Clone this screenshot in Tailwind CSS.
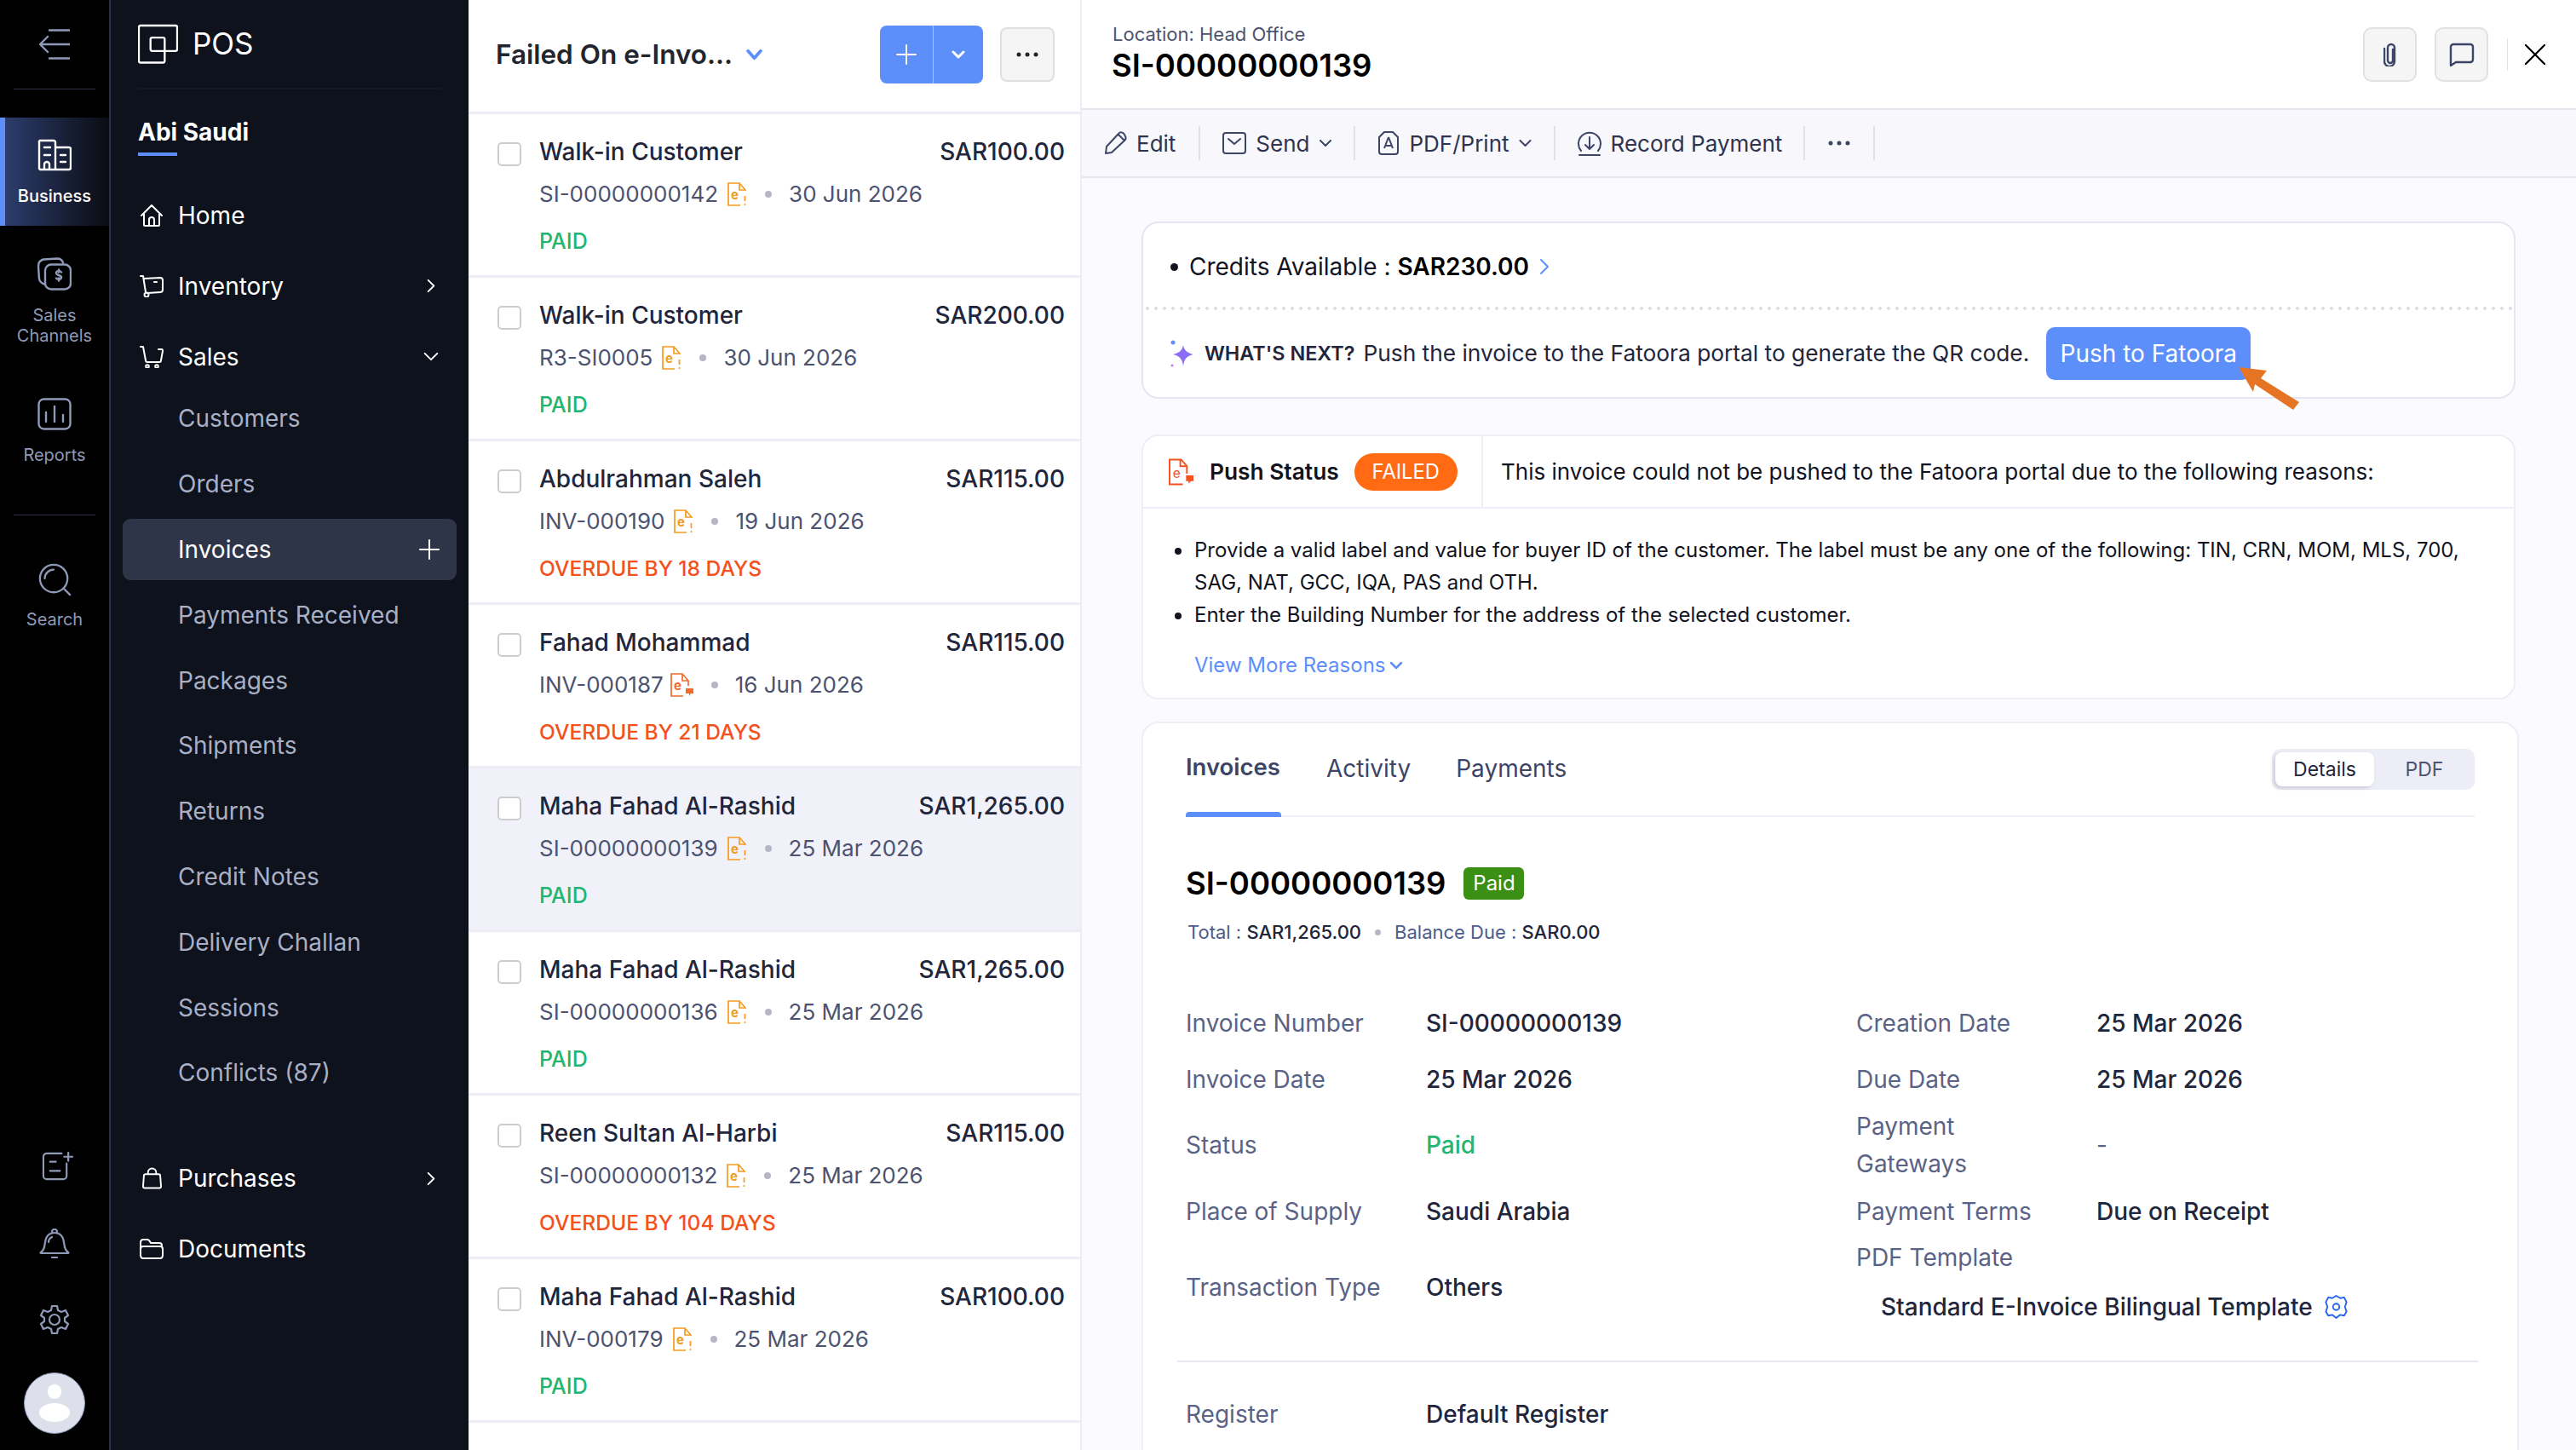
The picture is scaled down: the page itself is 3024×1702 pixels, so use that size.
<!DOCTYPE html>
<html lang="en">

<head>
    <meta charset="UTF-8" />
    <title>POS - Invoices</title>
    <script src="https://cdn.jsdelivr.net/npm/@tailwindcss/browser@4"></script>
</head>

<body class="bg-white font-['Inter','Liberation_Sans',sans-serif] text-[#21263c]">
    <div class="flex h-[1702px] w-[3024px] overflow-hidden">

        <!-- icon rail -->
        <aside class="flex h-full w-[130px] shrink-0 flex-col items-center border-r-2 border-[#2b3245] bg-black text-[20px] leading-[24px] text-[#8f9ab8]">
            <div class="flex h-[104px] w-full shrink-0 items-center justify-center">
                <svg class="h-[36px] w-[36px]" viewBox="0 0 36 36" fill="none" stroke="#8f9ab8" stroke-width="2.400" stroke-linecap="round" stroke-linejoin="round"><path d="M12 1.500h24M12 34.500h24M1 18h35M10 9l-9 9 9 9" /></svg>
            </div>
            <div class="h-px w-[96px] shrink-0 bg-[#2b3245]"></div>
            <div class="mt-[33px] flex h-[127px] w-full shrink-0 flex-col items-center border-l-[6px] border-[#5d8ffb] bg-linear-to-r from-[#2c3d6e] to-[#0b0d14] pr-[6px] text-white">
                <svg class="mt-[24px] h-[40px] w-[40px]" viewBox="0 0 40 38" fill="none" stroke="#fff" stroke-width="2.400" stroke-linecap="round" stroke-linejoin="round"><path d="M3 36h34a2 2 0 0 0 2-2V12a2 2 0 0 0-2-2H21V4a2 2 0 0 0-2-2H3a1.500 1.500 0 0 0-1 2v30a2 2 0 0 0 1 2zM21 10v26M8 10h7M8 19h7M27 19h6M27 27h6M8 36v-6a3 3 0 0 1 6 0v6" /></svg>
                <span class="mt-[16px] font-medium">Business</span>
            </div>
            <svg class="mt-[37px] h-[39px] w-[40px] shrink-0" viewBox="0 0 40 38" fill="none" stroke="#8f9ab8" stroke-width="2.400" stroke-linecap="round" stroke-linejoin="round"><path d="M8 31c-3-1-5-2-6-6L1 10c0-4 2-7 6-8l16-1c3 0 6 1 7 5" /><rect x="9" y="8" width="30" height="29" rx="7" /><path d="M28 17c-1-2-6-2-6 1s6 2 6 5-5 3-6 1M25 14v3M25 27v-3" /></svg>
            <span class="mt-[17px] w-full text-center">Sales Channels</span>
            <svg class="mt-[61px] h-[38px] w-[40px] shrink-0" viewBox="0 0 40 38" fill="none" stroke="#8f9ab8" stroke-width="2.400" stroke-linecap="round"><rect x="1.500" y="1.500" width="37" height="35" rx="6" /><path d="M10 17v11M20 10v18M30 20v8" /></svg>
            <span class="mt-[17px]">Reports</span>
            <div class="mt-[58px] h-px w-[96px] shrink-0 bg-[#2b3245]"></div>
            <svg class="mt-[55px] h-[40px] w-[40px] shrink-0" viewBox="0 0 42 42" fill="none" stroke="#8f9ab8" stroke-width="2.400" stroke-linecap="round"><circle cx="20" cy="20" r="17" /><path d="M32 32l8 8M9 20a11 11 0 0 1 11-11" /></svg>
            <span class="mt-[15px]">Search</span>

            <div class="mt-auto flex flex-col items-center pb-[19px]">
                <svg class="ml-[7px] h-[35px] w-[37px]" viewBox="0 0 38 34" fill="none" stroke="#8f9ab8" stroke-width="2.200" stroke-linecap="round" stroke-linejoin="round"><path d="M24 2H6a4 4 0 0 0-4 4v23a4 4 0 0 0 4 4h20a4 4 0 0 0 4-4V14M32 1v10M27 6h10M10 12h7M10 23h12" /></svg>
                <svg class="mt-[55px] h-[36px] w-[36px]" viewBox="0 0 36 36" fill="none" stroke="#8f9ab8" stroke-width="2.200" stroke-linecap="round" stroke-linejoin="round"><path d="M2 29c4-3 4-6 5-12 1-7 5-11 11-11s10 4 11 11c1 6 1 9 5 12 1 1 0 1-1 1H3c-1 0-2 0-1-1zM15 35h6M15 5a3 3 0 0 1 6 0M11 17c0-3 2-5 4-6" /></svg>
                <svg class="mt-[54px] h-[36px] w-[36px]" viewBox="0 0 36 36" fill="none" stroke="#8f9ab8" stroke-width="2.200" stroke-linecap="round" stroke-linejoin="round"><circle cx="18" cy="18" r="6" /><path d="M15 2h6l1 5 4 2 5-2 3 6-4 3v4l4 3-3 6-5-2-4 2-1 5h-6l-1-5-4-2-5 2-3-6 4-3v-4l-4-3 3-6 5 2 4-2z" /></svg>
                <div class="relative mt-[44px] h-[72px] w-[72px] overflow-hidden rounded-full border border-[#8f9ab8] bg-[#dde0ea]">
                    <div class="absolute top-[13px] left-[27px] h-[17px] w-[16px] rounded-full bg-white"></div>
                    <div class="absolute top-[35px] left-[17px] h-[22px] w-[36px] rounded-[50%] bg-white"></div>
                </div>
            </div>
        </aside>

        <!-- module sidebar -->
        <nav class="flex h-full w-[420px] shrink-0 flex-col bg-[#0d121c] px-[32px] text-white">
            <div class="flex h-[105px] shrink-0 items-center gap-[17px] border-b-2 border-[#161b27]">
                <svg class="h-[47px] w-[47px]" viewBox="0 0 48 47" fill="none" stroke="#fff" stroke-width="2.400" stroke-linejoin="round"><path d="M3 1.500h42a2 2 0 0 1 2 2V30a2 2 0 0 1-2 2H17a2 2 0 0 1-2-2V18a2 2 0 0 1 2-2h13a2 2 0 0 1 2 2v26a2 2 0 0 1-2 2H3a2 2 0 0 1-2-2V3.500a2 2 0 0 1 2-2z" /></svg>
                <span class="text-[35px] leading-none font-normal">POS</span>
            </div>
            <div class="mt-[32px] text-[28px] leading-[36px] font-bold">Abi Saudi</div>
            <div class="mt-[6px] h-[4px] w-[46px] shrink-0 bg-[#5d8ffb]"></div>

            <div class="mt-[28px] flex h-[83px] shrink-0 items-center gap-[18px] text-[28px]">
                <svg class="ml-[3px] h-[26px] w-[26px]" viewBox="0 0 26 26" fill="none" stroke="#fff" stroke-width="2" stroke-linejoin="round" stroke-linecap="round"><path d="M1 13L13 1l12 12M4 11v13a1 1 0 0 0 1 1h16a1 1 0 0 0 1-1V11M10 25v-7a3 3 0 0 1 6 0v7" /></svg>
                <span>Home</span>
            </div>
            <div class="flex h-[83px] shrink-0 items-center gap-[17px] text-[28px]">
                <svg class="ml-[2px] h-[26px] w-[28px]" viewBox="0 0 28 26" fill="none" stroke="#fff" stroke-width="2" stroke-linejoin="round" stroke-linecap="round"><path d="M1 1h3l3 19M5 4l19-1c2 0 3 1 3 3v11c0 2-1 3-3 3l-15 1" /><circle cx="8" cy="23" r="2.500" /><path d="M17 8h3" /></svg>
                <span>Inventory</span>
                <svg class="mr-[7px] ml-auto h-[19px] w-[10px]" viewBox="0 0 12 20" fill="none" stroke="#fff" stroke-width="2.200" stroke-linecap="round" stroke-linejoin="round"><path d="M2 2l8 8-8 8" /></svg>
            </div>
            <div class="flex h-[83px] shrink-0 items-center gap-[17px] text-[28px]">
                <svg class="ml-[2px] h-[26px] w-[28px]" viewBox="0 0 28 26" fill="none" stroke="#fff" stroke-width="2" stroke-linejoin="round" stroke-linecap="round"><path d="M1 1h3l3 16c0 1 1 2 2 2h14c1 0 2-1 2-2l2-11c0-1 0-2-1-2h-4" /><circle cx="9" cy="24" r="1.800" /><circle cx="20" cy="24" r="1.800" /></svg>
                <span>Sales</span>
                <svg class="mr-[2px] ml-auto h-[11px] w-[20px]" viewBox="0 0 20 12" fill="none" stroke="#fff" stroke-width="2" stroke-linecap="round" stroke-linejoin="round"><path d="M2 2l8 8 8-8" /></svg>
            </div>

            <div class="-mt-[7px] flex shrink-0 flex-col text-[28px] text-[#a9afc4]">
                <a class="flex h-[76.800px] items-center pl-[47px]">Customers</a>
                <a class="flex h-[76.800px] items-center pl-[47px]">Orders</a>
                <a class="-mx-[18px] my-[2px] flex h-[72.800px] items-center rounded-[9px] bg-[#2f3548] pr-[20px] pl-[65px] text-white">Invoices<svg class="ml-auto h-[24px] w-[24px]" viewBox="0 0 24 24" fill="none" stroke="#fff" stroke-width="2" stroke-linecap="round"><path d="M12 1v22M1 12h22" /></svg></a>
                <a class="flex h-[76.800px] items-center pl-[47px]">Payments Received</a>
                <a class="flex h-[76.800px] items-center pl-[47px]">Packages</a>
                <a class="flex h-[76.800px] items-center pl-[47px]">Shipments</a>
                <a class="flex h-[76.800px] items-center pl-[47px]">Returns</a>
                <a class="flex h-[76.800px] items-center pl-[47px]">Credit Notes</a>
                <a class="flex h-[76.800px] items-center pl-[47px]">Delivery Challan</a>
                <a class="flex h-[76.800px] items-center pl-[47px]">Sessions</a>
                <a class="flex h-[76.800px] items-center pl-[47px]">Conflicts (87)</a>
            </div>

            <div class="mt-[44px] flex h-[83px] shrink-0 items-center gap-[19px] text-[28px]">
                <svg class="ml-[5px] h-[26px] w-[23px]" viewBox="0 0 24 26" fill="none" stroke="#fff" stroke-width="2" stroke-linejoin="round" stroke-linecap="round"><path d="M4 8h16a2 2 0 0 1 2 2l1 13a2 2 0 0 1-2 2H3a2 2 0 0 1-2-2l1-13a2 2 0 0 1 2-2zM7 8V6a5 5 0 0 1 10 0v2" /></svg>
                <span>Purchases</span>
                <svg class="mr-[7px] ml-auto h-[19px] w-[10px]" viewBox="0 0 12 20" fill="none" stroke="#fff" stroke-width="2.200" stroke-linecap="round" stroke-linejoin="round"><path d="M2 2l8 8-8 8" /></svg>
            </div>
            <div class="flex h-[83px] shrink-0 items-center gap-[17px] text-[28px]">
                <svg class="ml-[2px] h-[24px] w-[28px]" viewBox="0 0 28 24" fill="none" stroke="#fff" stroke-width="2" stroke-linejoin="round" stroke-linecap="round"><path d="M1 19V5c0-2 1-4 3-4h5c2 0 3 2 4 4h10c2 0 3 1 3 3M1 12c0-2 1-3 3-3h20c2 0 3 1 3 3v7c0 2-1 4-3 4H4c-2 0-3-2-3-4z" /></svg>
                <span>Documents</span>
            </div>
        </nav>

        <!-- invoice list -->
        <section class="flex h-full w-[720px] shrink-0 flex-col overflow-hidden border-r-2 border-[#ecedf5]">
            <div class="flex h-[134px] shrink-0 items-center border-b-[3px] border-[#ecedf5] pr-[30px] pb-[3px] pl-[32px]">
                <span class="text-[31.500px] leading-none font-semibold text-[#21252e]">Failed On e-Invo...</span>
                <svg class="ml-[15px] h-[13px] w-[21px]" viewBox="0 0 20 14" fill="none" stroke="#5d8ffb" stroke-width="4" stroke-linecap="round" stroke-linejoin="round"><path d="M2 2l8 9 8-9" /></svg>
                <div class="mr-[20px] ml-auto flex h-[68px] w-[121px] rounded-[8px] bg-[#5d8ffb]">
                    <div class="flex w-[63px] items-center justify-center border-r border-[#a9c3fd]"><svg class="h-[24px] w-[24px]" viewBox="0 0 24 24" fill="none" stroke="#fff" stroke-width="2" stroke-linecap="round"><path d="M12 1v22M1 12h22" /></svg></div>
                    <div class="flex flex-1 items-center justify-center"><svg class="h-[10px] w-[16px]" viewBox="0 0 16 10" fill="none" stroke="#fff" stroke-width="3" stroke-linecap="round" stroke-linejoin="round"><path d="M2 2l6 6 6-6" /></svg></div>
                </div>
                <div class="flex h-[64px] w-[64px] items-center justify-center rounded-[8px] border-2 border-[#dedfe3] bg-[#f5f5f6] text-[#21252e]"><svg class="h-[6px] w-[26px]" viewBox="0 0 26 6" fill="#21252e"><circle cx="3" cy="3" r="2.500" /><circle cx="13" cy="3" r="2.500" /><circle cx="23" cy="3" r="2.500" /></svg></div>
            </div>

            <div class="flex h-[192px] shrink-0 border-b-[3px] border-[#ecedf5] pt-[33px] pr-[18px] pl-[34px]">
                <div class="h-[28px] w-[28px] rounded-[5px] border-2 border-[#cdcdd1]"></div>
                <div class="-mt-[7px] ml-[21px] flex-1">
                    <div class="flex justify-between text-[28px] leading-[36px] font-medium text-[#21263c]"><span>Walk-in Customer</span><span>SAR100.00</span></div>
                    <div class="mt-[14px] flex items-center text-[26px] leading-[36px] text-[#4c5370]">SI-00000000142<svg class="mr-[22px] ml-[11px] h-[28px] w-[22px]" viewBox="0 0 22 28" fill="none" stroke="#f39c1f" stroke-width="1.700"><path d="M15 27H1V1h13l7 8v1M14 1v8h7" /><text x="4" y="20" font-size="15" font-weight="700" stroke="none" fill="#f39c1f">e</text><path d="M20.500 16v6M20.500 25v2" /></svg><span class="h-[8px] w-[8px] rounded-full bg-[#b5b7c6]"></span><span class="ml-[20px]">30 Jun 2026</span></div>
                    <div class="mt-[21px] text-[25px] leading-[32px] font-medium text-[#22b573]">PAID</div>
                </div>
            </div>
            <div class="flex h-[192px] shrink-0 border-b-[3px] border-[#ecedf5] pt-[33px] pr-[18px] pl-[34px]">
                <div class="h-[28px] w-[28px] rounded-[5px] border-2 border-[#cdcdd1]"></div>
                <div class="-mt-[7px] ml-[21px] flex-1">
                    <div class="flex justify-between text-[28px] leading-[36px] font-medium text-[#21263c]"><span>Walk-in Customer</span><span>SAR200.00</span></div>
                    <div class="mt-[14px] flex items-center text-[26px] leading-[36px] text-[#4c5370]">R3-SI0005<svg class="mr-[22px] ml-[11px] h-[28px] w-[22px]" viewBox="0 0 22 28" fill="none" stroke="#f39c1f" stroke-width="1.700"><path d="M15 27H1V1h13l7 8v1M14 1v8h7" /><text x="4" y="20" font-size="15" font-weight="700" stroke="none" fill="#f39c1f">e</text><path d="M20.500 16v6M20.500 25v2" /></svg><span class="h-[8px] w-[8px] rounded-full bg-[#b5b7c6]"></span><span class="ml-[20px]">30 Jun 2026</span></div>
                    <div class="mt-[21px] text-[25px] leading-[32px] font-medium text-[#22b573]">PAID</div>
                </div>
            </div>
            <div class="flex h-[192px] shrink-0 border-b-[3px] border-[#ecedf5] pt-[33px] pr-[18px] pl-[34px]">
                <div class="h-[28px] w-[28px] rounded-[5px] border-2 border-[#cdcdd1]"></div>
                <div class="-mt-[7px] ml-[21px] flex-1">
                    <div class="flex justify-between text-[28px] leading-[36px] font-medium text-[#21263c]"><span>Abdulrahman Saleh</span><span>SAR115.00</span></div>
                    <div class="mt-[14px] flex items-center text-[26px] leading-[36px] text-[#4c5370]">INV-000190<svg class="mr-[22px] ml-[11px] h-[28px] w-[22px]" viewBox="0 0 22 28" fill="none" stroke="#f39c1f" stroke-width="1.700"><path d="M15 27H1V1h13l7 8v1M14 1v8h7" /><text x="4" y="20" font-size="15" font-weight="700" stroke="none" fill="#f39c1f">e</text><path d="M20.500 16v6M20.500 25v2" /></svg><span class="h-[8px] w-[8px] rounded-full bg-[#b5b7c6]"></span><span class="ml-[20px]">19 Jun 2026</span></div>
                    <div class="mt-[21px] text-[24.600px] leading-[32px] font-medium text-[#f4511e]">OVERDUE BY 18 DAYS</div>
                </div>
            </div>
            <div class="flex h-[192px] shrink-0 border-b-[3px] border-[#ecedf5] pt-[33px] pr-[18px] pl-[34px]">
                <div class="h-[28px] w-[28px] rounded-[5px] border-2 border-[#cdcdd1]"></div>
                <div class="-mt-[7px] ml-[21px] flex-1">
                    <div class="flex justify-between text-[28px] leading-[36px] font-medium text-[#21263c]"><span>Fahad Mohammad</span><span>SAR115.00</span></div>
                    <div class="mt-[14px] flex items-center text-[26px] leading-[36px] text-[#4c5370]">INV-000187<svg class="mr-[20px] ml-[8px] h-[28px] w-[28px]" viewBox="0 0 28 28" fill="none" stroke="#f26a2e" stroke-width="1.700"><path d="M15 27H1V1h13l7 8v6M14 1v8h7" /><text x="4" y="20" font-size="15" font-weight="700" stroke="none" fill="#f26a2e">e</text><path d="M18 18h9v6h-3l-2 3v-3h-4z" fill="#f26a2e" stroke="none" /></svg><span class="h-[8px] w-[8px] rounded-full bg-[#b5b7c6]"></span><span class="ml-[20px]">16 Jun 2026</span></div>
                    <div class="mt-[21px] text-[24.600px] leading-[32px] font-medium text-[#f4511e]">OVERDUE BY 21 DAYS</div>
                </div>
            </div>
            <div class="flex h-[192px] shrink-0 border-b-[3px] border-[#ecedf5] bg-[#f0f1f9] pt-[33px] pr-[18px] pl-[34px]">
                <div class="h-[28px] w-[28px] rounded-[5px] border-2 border-[#cdcdd1] bg-white"></div>
                <div class="-mt-[7px] ml-[21px] flex-1">
                    <div class="flex justify-between text-[28px] leading-[36px] font-medium text-[#21263c]"><span>Maha Fahad Al-Rashid</span><span>SAR1,265.00</span></div>
                    <div class="mt-[14px] flex items-center text-[26px] leading-[36px] text-[#4c5370]">SI-00000000139<svg class="mr-[22px] ml-[11px] h-[28px] w-[22px]" viewBox="0 0 22 28" fill="none" stroke="#f39c1f" stroke-width="1.700"><path d="M15 27H1V1h13l7 8v1M14 1v8h7" /><text x="4" y="20" font-size="15" font-weight="700" stroke="none" fill="#f39c1f">e</text><path d="M20.500 16v6M20.500 25v2" /></svg><span class="h-[8px] w-[8px] rounded-full bg-[#b5b7c6]"></span><span class="ml-[20px]">25 Mar 2026</span></div>
                    <div class="mt-[21px] text-[25px] leading-[32px] font-medium text-[#22b573]">PAID</div>
                </div>
            </div>
            <div class="flex h-[192px] shrink-0 border-b-[3px] border-[#ecedf5] pt-[33px] pr-[18px] pl-[34px]">
                <div class="h-[28px] w-[28px] rounded-[5px] border-2 border-[#cdcdd1]"></div>
                <div class="-mt-[7px] ml-[21px] flex-1">
                    <div class="flex justify-between text-[28px] leading-[36px] font-medium text-[#21263c]"><span>Maha Fahad Al-Rashid</span><span>SAR1,265.00</span></div>
                    <div class="mt-[14px] flex items-center text-[26px] leading-[36px] text-[#4c5370]">SI-00000000136<svg class="mr-[22px] ml-[11px] h-[28px] w-[22px]" viewBox="0 0 22 28" fill="none" stroke="#f39c1f" stroke-width="1.700"><path d="M15 27H1V1h13l7 8v1M14 1v8h7" /><text x="4" y="20" font-size="15" font-weight="700" stroke="none" fill="#f39c1f">e</text><path d="M20.500 16v6M20.500 25v2" /></svg><span class="h-[8px] w-[8px] rounded-full bg-[#b5b7c6]"></span><span class="ml-[20px]">25 Mar 2026</span></div>
                    <div class="mt-[21px] text-[25px] leading-[32px] font-medium text-[#22b573]">PAID</div>
                </div>
            </div>
            <div class="flex h-[192px] shrink-0 border-b-[3px] border-[#ecedf5] pt-[33px] pr-[18px] pl-[34px]">
                <div class="h-[28px] w-[28px] rounded-[5px] border-2 border-[#cdcdd1]"></div>
                <div class="-mt-[7px] ml-[21px] flex-1">
                    <div class="flex justify-between text-[28px] leading-[36px] font-medium text-[#21263c]"><span>Reen Sultan Al-Harbi</span><span>SAR115.00</span></div>
                    <div class="mt-[14px] flex items-center text-[26px] leading-[36px] text-[#4c5370]">SI-00000000132<svg class="mr-[22px] ml-[11px] h-[28px] w-[22px]" viewBox="0 0 22 28" fill="none" stroke="#f39c1f" stroke-width="1.700"><path d="M15 27H1V1h13l7 8v1M14 1v8h7" /><text x="4" y="20" font-size="15" font-weight="700" stroke="none" fill="#f39c1f">e</text><path d="M20.500 16v6M20.500 25v2" /></svg><span class="h-[8px] w-[8px] rounded-full bg-[#b5b7c6]"></span><span class="ml-[20px]">25 Mar 2026</span></div>
                    <div class="mt-[21px] text-[24.600px] leading-[32px] font-medium text-[#f4511e]">OVERDUE BY 104 DAYS</div>
                </div>
            </div>
            <div class="flex h-[192px] shrink-0 border-b-[3px] border-[#ecedf5] pt-[33px] pr-[18px] pl-[34px]">
                <div class="h-[28px] w-[28px] rounded-[5px] border-2 border-[#cdcdd1]"></div>
                <div class="-mt-[7px] ml-[21px] flex-1">
                    <div class="flex justify-between text-[28px] leading-[36px] font-medium text-[#21263c]"><span>Maha Fahad Al-Rashid</span><span>SAR100.00</span></div>
                    <div class="mt-[14px] flex items-center text-[26px] leading-[36px] text-[#4c5370]">INV-000179<svg class="mr-[22px] ml-[11px] h-[28px] w-[22px]" viewBox="0 0 22 28" fill="none" stroke="#f39c1f" stroke-width="1.700"><path d="M15 27H1V1h13l7 8v1M14 1v8h7" /><text x="4" y="20" font-size="15" font-weight="700" stroke="none" fill="#f39c1f">e</text><path d="M20.500 16v6M20.500 25v2" /></svg><span class="h-[8px] w-[8px] rounded-full bg-[#b5b7c6]"></span><span class="ml-[20px]">25 Mar 2026</span></div>
                    <div class="mt-[21px] text-[25px] leading-[32px] font-medium text-[#22b573]">PAID</div>
                </div>
            </div>
            <div class="flex h-[192px] shrink-0 pt-[33px] pr-[18px] pl-[34px]">
                <div class="h-[28px] w-[28px] rounded-[5px] border-2 border-[#cdcdd1]"></div>
                <div class="-mt-[7px] ml-[21px] flex-1">
                    <div class="flex justify-between text-[28px] leading-[36px] font-medium text-[#21263c]"><span>Walid</span><span>SAR115.00</span></div>
                </div>
            </div>
        </section>

        <!-- invoice detail -->
        <main class="flex h-full min-w-0 flex-1 flex-col overflow-hidden bg-[#fafaff]">
            <header class="flex h-[129px] shrink-0 items-center border-b-2 border-[#e6e6f2] bg-white pr-[36px] pl-[35px]">
                <div>
                    <div class="pl-px text-[22px] leading-[26px] text-[#4c5370]">Location: Head Office</div>
                    <div class="mt-px text-[36.500px] leading-[46px] font-semibold text-black">SI-00000000139</div>
                </div>
                <div class="ml-auto flex h-[64px] w-[63px] items-center justify-center rounded-[10px] border-2 border-[#e1e1e4] bg-[#f5f5f6]"><svg class="h-[28px] w-[16px]" viewBox="0 0 16 28" fill="none" stroke="#3d4566" stroke-width="2.400" stroke-linecap="round"><path d="M11 8v13a3 3 0 0 1-6 0V6a4 4 0 0 1 8 0v16a6 6 0 0 1-12 0V7" /></svg></div>
                <div class="ml-[21px] flex h-[64px] w-[63px] items-center justify-center rounded-[10px] border-2 border-[#e1e1e4] bg-[#f5f5f6]"><svg class="h-[28px] w-[30px]" viewBox="0 0 30 28" fill="none" stroke="#3d4566" stroke-width="2.400" stroke-linejoin="round"><path d="M2 5a3 3 0 0 1 3-3h20a3 3 0 0 1 3 3v15a3 3 0 0 1-3 3H8l-6 4z" /></svg></div>
                <div class="mr-[20px] ml-[22px] h-[38px] w-px bg-[#e1e1e4]"></div>
                <svg class="h-[24px] w-[24px]" viewBox="0 0 24 24" fill="none" stroke="#000" stroke-width="2.200" stroke-linecap="round"><path d="M1 1l22 22M23 1L1 23" /></svg>
            </header>

            <div class="flex h-[80px] shrink-0 items-center border-b-2 border-[#e6e6f2] bg-[#f7f7fc] pl-[26px] text-[26px] text-[#2e3450]">
                <div class="flex h-[40px] items-center gap-[10px] border-r-2 border-[#e1e1ec] pr-[27px]"><svg class="h-[28px] w-[28px]" viewBox="0 0 28 28" fill="none" stroke="#3d4566" stroke-width="2" stroke-linejoin="round"><path d="M2 26l1-8L17 3a4 4 0 0 1 7 1l1 2a4 4 0 0 1-1 5L9 25zM17 4l7 7" /></svg>Edit</div>
                <div class="flex h-[40px] items-center border-r-2 border-[#e1e1ec] pr-[26px] pl-[26px]"><svg class="mr-[11px] h-[26px] w-[28px]" viewBox="0 0 28 26" fill="none" stroke="#3d4566" stroke-width="2" stroke-linejoin="round" stroke-linecap="round"><rect x="1" y="1" width="26" height="24" rx="3" /><path d="M7 8l7 6 7-6" /></svg>Send<svg class="ml-[12px] h-[8px] w-[14px]" viewBox="0 0 14 8" fill="none" stroke="#3d4566" stroke-width="2" stroke-linecap="round" stroke-linejoin="round"><path d="M1 1l6 6 6-6" /></svg></div>
                <div class="flex h-[40px] items-center border-r-2 border-[#e1e1ec] pr-[26px] pl-[27px]"><svg class="mr-[12px] h-[28px] w-[24px]" viewBox="0 0 24 28" fill="none" stroke="#3d4566" stroke-width="2" stroke-linejoin="round"><path d="M7 1h10l6 6v17a3 3 0 0 1-3 3H4a3 3 0 0 1-3-3V7zM12 7l5 13M12 7l-5 13M8 17h8" /></svg>PDF/Print<svg class="ml-[11px] h-[8px] w-[15px]" viewBox="0 0 14 8" fill="none" stroke="#3d4566" stroke-width="2" stroke-linecap="round" stroke-linejoin="round"><path d="M1 1l6 6 6-6" /></svg></div>
                <div class="flex h-[40px] items-center border-r-2 border-[#e1e1ec] pr-[25px] pl-[26px]"><svg class="mr-[11px] h-[30px] w-[28px]" viewBox="0 0 28 30" fill="none" stroke="#3d4566" stroke-width="2" stroke-linecap="round" stroke-linejoin="round"><path d="M4 24a13 13 0 1 1 20 0M14 8v14M9 17l5 5 5-5M2 29h24" /></svg>Record Payment</div>
                <div class="flex h-[40px] items-center border-r-2 border-[#e1e1ec] px-[27px]"><svg class="h-[6px] w-[26px]" viewBox="0 0 26 6" fill="#3d4566"><circle cx="3" cy="3" r="2.500" /><circle cx="13" cy="3" r="2.500" /><circle cx="23" cy="3" r="2.500" /></svg></div>
            </div>

            <div class="flex flex-col pt-[51px] pr-[67px] pl-[70px]">
                <!-- credits + next step -->
                <div class="mr-[4px] h-[208px] shrink-0 rounded-[20px] border-2 border-[#e6e6f2] bg-white">
                    <div class="flex h-[98px] items-center pt-[4px] pl-[32px] text-[28px] text-[#11141f]">
                        <span class="mr-[13px] h-[9px] w-[9px] rounded-full bg-[#11141f]"></span>Credits Available :&nbsp;<span class="font-semibold text-black">SAR230.00</span>
                        <svg class="ml-[12px] h-[20px] w-[12px]" viewBox="0 0 12 20" fill="none" stroke="#5d8ffb" stroke-width="2" stroke-linecap="round" stroke-linejoin="round"><path d="M2 2l8 8-8 8" /></svg>
                    </div>
                    <div class="h-[4px] bg-[radial-gradient(circle,#dcdce4_2px,transparent_2px)] bg-[length:10px_4px]"></div>
                    <div class="flex h-[102px] items-center pl-[31px] text-[26.300px] text-[#21263c]">
                        <svg class="mr-[11px] h-[32px] w-[30px]" viewBox="0 0 30 32" fill="#8c6cf7"><path d="M16 6c1 6 4 9 12 11-8 2-11 5-12 14-1-9-4-12-12-14 8-2 11-5 12-11z" /><circle cx="4" cy="3" r="2.500" fill="#5d8ffb" /><circle cx="3" cy="30" r="1.500" fill="#c86cf7" /></svg>
                        <span class="mr-[10px] text-[23.400px] font-semibold">WHAT'S NEXT?</span>Push the invoice to the Fatoora portal to generate the QR code.
                        <div class="relative ml-[20px] flex h-[62px] w-[240px] items-center justify-center rounded-[10px] bg-[#5d8ffb] text-[28px] text-white">Push to Fatoora
                            <svg class="absolute top-[47px] left-[226px] h-[52px] w-[72px]" viewBox="0 0 72 52" fill="#e57425"><path d="M0 0L33 4 26 13 71 41 64 50 19 20 17 29z" /></svg>
                        </div>
                    </div>
                </div>

                <!-- push status -->
                <div class="mt-[42px] mr-[4px] h-[311px] shrink-0 rounded-[20px] border-2 border-[#eeeef6] bg-white">
                    <div class="flex h-[85px] border-b-2 border-[#eeeef6]">
                        <div class="flex w-[399px] items-center border-r-2 border-[#eeeef6] pl-[30px]">
                            <svg class="h-[32px] w-[31px]" viewBox="0 0 32 32" fill="none" stroke="#f4511e" stroke-width="2"><path d="M17 31H1V1h14l7 8v9M14 1v8h8" /><text x="5" y="23" font-size="16" stroke="none" fill="#f4511e">e</text><path d="M21 20h9v7h-3l-3 3v-3h-3z" fill="#f4511e" stroke="none" /></svg>
                            <span class="ml-[17px] text-[26.300px] font-semibold text-[#11141f]">Push Status</span>
                            <span class="ml-[18px] flex h-[44px] w-[121px] items-center justify-center rounded-full bg-[#ff6a13] text-[23.700px] text-white">FAILED</span>
                        </div>
                        <div class="flex items-center pl-[21px] text-[26px] text-[#11141f]">This invoice could not be pushed to the Fatoora portal due to the following reasons:</div>
                    </div>
                    <ul class="mt-[30px] pr-[60px] pl-[60px] text-[24px] leading-[38px] text-[#11141f]">
                        <li class="relative"><span class="absolute top-[16px] -left-[23px] h-[8px] w-[8px] rounded-full bg-[#11141f]"></span>Provide a valid label and value for buyer ID of the customer. The label must be any one of the following: TIN, CRN, MOM, MLS, 700, SAG, NAT, GCC, IQA, PAS and OTH.</li>
                        <li class="relative"><span class="absolute top-[16px] -left-[23px] h-[8px] w-[8px] rounded-full bg-[#11141f]"></span>Enter the Building Number for the address of the selected customer.</li>
                    </ul>
                    <div class="mt-[20px] flex items-center gap-[6px] pl-[60px] text-[24px] leading-[40px] text-[#5d8ffb]">View More Reasons<svg class="h-[9px] w-[14px]" viewBox="0 0 14 9" fill="none" stroke="#5d8ffb" stroke-width="2.500" stroke-linecap="round" stroke-linejoin="round"><path d="M1 1l6 6 6-6" /></svg></div>
                </div>

                <!-- details card -->
                <div class="mt-[26px] h-[900px] shrink-0 rounded-t-[20px] border-2 border-[#eeeef6] bg-white px-[50px]">
                    <div class="flex h-[110px] items-end border-b-2 border-[#eeeef6]">
                        <div class="-mb-[2px] flex h-[77px] w-[112px] flex-col justify-between"><span class="text-[27.500px] leading-[36px] font-semibold text-[#3d4566]">Invoices</span><span class="h-[6px] rounded-t-[4px] bg-[#5d8ffb]"></span></div>
                        <span class="mb-[37px] ml-[53px] text-[28px] leading-[36px] text-[#3d4566]">Activity</span>
                        <span class="mb-[37px] ml-[53px] text-[28px] leading-[36px] text-[#3d4566]">Payments</span>
                        <div class="mb-[30px] ml-auto flex h-[48px] w-[238px] items-center rounded-[10px] bg-[#ecedf7] pl-[4px]">
                            <div class="flex h-[40px] w-[116px] items-center justify-center rounded-[8px] bg-white text-[23px] text-[#21263c] shadow-[-2px_2px_4px_#c9c9d8]">Details</div>
                            <div class="flex-1 text-center text-[23px] text-[#4c5370]">PDF</div>
                        </div>
                    </div>

                    <div class="mt-[58px] flex h-[40px] items-center">
                        <span class="text-[36.500px] leading-none font-semibold text-black">SI-00000000139</span>
                        <span class="ml-[21px] flex h-[38px] w-[71px] items-center justify-center rounded-[6px] bg-[#3a8f14] text-[24px] text-white">Paid</span>
                    </div>
                    <div class="mt-[21px] flex items-center pl-[2px] text-[22px] leading-[32px] text-[#4c5c8a]">Total :&nbsp;<span class="font-medium text-[#21263c]">SAR1,265.00</span><span class="mx-[16px] h-[7px] w-[7px] rounded-full bg-[#b5b7c6]"></span>Balance Due :&nbsp;<span class="font-medium text-[#21263c]">SAR0.00</span></div>

                    <div class="mt-[58px] grid grid-cols-[787px_1fr] text-[28px]">
                        <div class="flex flex-col">
                            <div class="flex h-[66px] items-center"><span class="w-[282px] text-[#5a6385]">Invoice Number</span><span class="font-medium text-[#21263c]">SI-00000000139</span></div>
                            <div class="flex h-[66px] items-center"><span class="w-[282px] text-[#5a6385]">Invoice Date</span><span class="font-medium text-[#21263c]">25 Mar 2026</span></div>
                            <div class="flex h-[88px] items-center"><span class="w-[282px] text-[#5a6385]">Status</span><span class="font-medium text-[#22b573]">Paid</span></div>
                            <div class="flex h-[68px] items-center"><span class="w-[282px] text-[#5a6385]">Place of Supply</span><span class="font-medium text-[#21263c]">Saudi Arabia</span></div>
                            <div class="mt-[21px] flex h-[68px] items-center"><span class="w-[282px] text-[#5a6385]">Transaction Type</span><span class="font-medium text-[#21263c]">Others</span></div>
                        </div>
                        <div class="flex flex-col">
                            <div class="flex h-[66px] items-center"><span class="w-[282px] text-[#5a6385]">Creation Date</span><span class="font-medium text-[#21263c]">25 Mar 2026</span></div>
                            <div class="flex h-[66px] items-center"><span class="w-[282px] text-[#5a6385]">Due Date</span><span class="font-medium text-[#21263c]">25 Mar 2026</span></div>
                            <div class="flex h-[88px] items-center"><span class="w-[282px] leading-[44px] text-[#5a6385]">Payment<br />Gateways</span><span class="text-[#5a6385]">-</span></div>
                            <div class="flex h-[68px] items-center"><span class="w-[282px] text-[#5a6385]">Payment Terms</span><span class="font-medium text-[#21263c]">Due on Receipt</span></div>
                            <div class="flex h-[40px] items-center text-[#5a6385]">PDF Template</div>
                            <div class="mt-[18px] flex h-[40px] items-center pl-[29px] font-medium text-[#21263c]">Standard E-Invoice Bilingual Template<svg class="ml-[14px] h-[28px] w-[27px]" viewBox="0 0 28 30" fill="none" stroke="#2563eb" stroke-width="2" stroke-linejoin="round"><path d="M14 1l5 3 5-1 3 6-2 6 2 6-3 5-5-1-5 4-5-4-5 1-3-5 2-6-2-6 3-6 5 1z" /><circle cx="14" cy="15" r="4" /></svg></div>
                        </div>
                    </div>
                    <div class="mt-[43px] -mr-[4px] -ml-[10px] h-[2px] bg-[#e6e6f2]"></div>
                    <div class="mt-[40px] flex items-center text-[28px] leading-[42px]"><span class="w-[282px] text-[#5a6385]">Register</span><span class="font-medium text-[#21263c]">Default Register</span></div>
                </div>
            </div>
        </main>
    </div>
</body>

</html>
